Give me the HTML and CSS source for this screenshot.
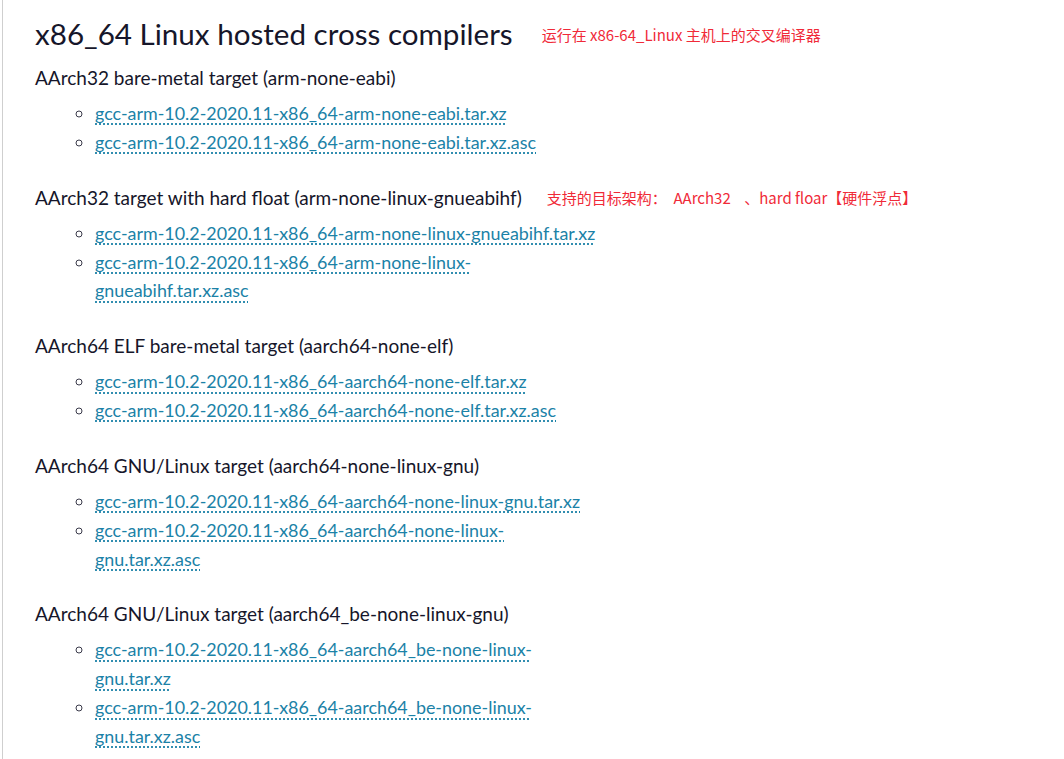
FILE: index.html
```html
<!DOCTYPE html>
<html lang="en">
<head>
<meta charset="utf-8">
<title>x86_64 Linux hosted cross compilers</title>
<link rel="stylesheet" href="styles.css">
</head>
<body>
<main class="page">
  <div class="title-row">
    <h1 class="title">x86_64 Linux hosted cross compilers</h1>
    <span class="note note-title">运行在 x86-64_Linux 主机上的交叉编译器</span>
  </div>

  <section class="target">
    <p class="target-name">AArch32 bare-metal target (arm-none-eabi)</p>
    <ul class="downloads">
      <li><a href="#">gcc-arm-10.2-2020.11-x86_64-arm-none-eabi.tar.xz</a></li>
      <li><a href="#">gcc-arm-10.2-2020.11-x86_64-arm-none-eabi.tar.xz.asc</a></li>
    </ul>
  </section>

  <section class="target">
    <div class="target-row">
      <p class="target-name">AArch32 target with hard float (arm-none-linux-gnueabihf)</p>
      <span class="note note-target">支持的目标架构：&nbsp;&nbsp;AArch32&nbsp;&nbsp;&nbsp;&nbsp;、hard floar【硬件浮点】</span>
    </div>
    <ul class="downloads">
      <li><a href="#">gcc-arm-10.2-2020.11-x86_64-arm-none-linux-gnueabihf.tar.xz</a></li>
      <li><a href="#">gcc-arm-10.2-2020.11-x86_64-arm-none-linux-gnueabihf.tar.xz.asc</a></li>
    </ul>
  </section>

  <section class="target">
    <p class="target-name">AArch64 ELF bare-metal target (aarch64-none-elf)</p>
    <ul class="downloads">
      <li><a href="#">gcc-arm-10.2-2020.11-x86_64-aarch64-none-elf.tar.xz</a></li>
      <li><a href="#">gcc-arm-10.2-2020.11-x86_64-aarch64-none-elf.tar.xz.asc</a></li>
    </ul>
  </section>

  <section class="target">
    <p class="target-name">AArch64 GNU/Linux target (aarch64-none-linux-gnu)</p>
    <ul class="downloads">
      <li><a href="#">gcc-arm-10.2-2020.11-x86_64-aarch64-none-linux-gnu.tar.xz</a></li>
      <li><a href="#">gcc-arm-10.2-2020.11-x86_64-aarch64-none-linux-gnu.tar.xz.asc</a></li>
    </ul>
  </section>

  <section class="target">
    <p class="target-name">AArch64 GNU/Linux target (aarch64_be-none-linux-gnu)</p>
    <ul class="downloads">
      <li><a href="#">gcc-arm-10.2-2020.11-x86_64-aarch64_be-none-linux-gnu.tar.xz</a></li>
      <li><a href="#">gcc-arm-10.2-2020.11-x86_64-aarch64_be-none-linux-gnu.tar.xz.asc</a></li>
    </ul>
  </section>
</main>
</body>
</html>
```

FILE: styles.css
```css
html, body {
  margin: 0;
  padding: 0;
  background: #ffffff;
}

body {
  font-family: Lato, "Noto Sans", sans-serif;
  color: #16162a;
}

.page {
  margin-left: 2px;
  border-left: 1px solid #cfcfcf;
  padding: 14px 0 0 32px;
  min-height: 759px;
  box-sizing: border-box;
}

.title-row {
  display: flex;
  align-items: center;
  gap: 29px;
  height: 40px;
  margin-bottom: 9px;
}

.title {
  margin: 0;
  font-size: 29.6px;
  font-weight: 400;
  line-height: 40px;
  white-space: nowrap;
}

.note {
  font-family: "Noto Sans CJK SC", "Noto Sans", sans-serif;
  font-size: 15px;
  color: #f02a38;
  white-space: nowrap;
}

.target {
  width: 570px;
  margin-bottom: 26px;
}

.target:last-child {
  margin-bottom: 0;
}

.target-row {
  display: flex;
  align-items: center;
  gap: 25px;
  margin-bottom: 7px;
}

.target-name {
  margin: 0 0 7px;
  font-size: 19px;
  line-height: 29px;
  white-space: nowrap;
}

.target-row .target-name {
  margin-bottom: 0;
}

.downloads {
  margin: 0;
  padding-left: 60px;
  list-style: circle;
  font-size: 17.9px;
  line-height: 28.85px;
}

.downloads li::marker {
  color: #3a3a4a;
}

.downloads a {
  color: #1b82a7;
  text-decoration: underline dotted;
  text-decoration-color: #1b82a7;
  text-underline-offset: 4px;
}
```
